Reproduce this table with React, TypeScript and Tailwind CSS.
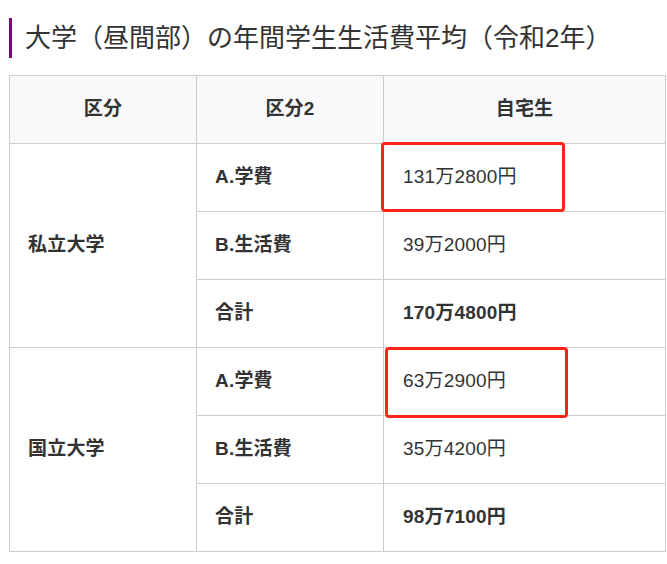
import React from "react";

const font = { fontFamily: '"Liberation Sans", "Noto Sans CJK JP", sans-serif' };

type Row = { a?: string; b: string; c: string; bold?: boolean; box?: "one" | "two" };

const rows: Row[] = [
  { a: "私立大学", b: "A.学費", c: "131万2800円", box: "one" },
  { b: "B.生活費", c: "39万2000円" },
  { b: "合計", c: "170万4800円", bold: true },
  { a: "国立大学", b: "A.学費", c: "63万2900円", box: "two" },
  { b: "B.生活費", c: "35万4200円" },
  { b: "合計", c: "98万7100円", bold: true },
];

export default function App() {
  return (
    <div className="w-[667px] h-[564px] bg-white text-[#333]" style={font}>
      <div className="pt-[18px] pl-[9px] flex">
        <div className="w-[3px] h-[40px] bg-[#800080]" />
        <div className="pl-[13px] h-[40px] flex items-center text-[26px] leading-none font-normal text-[#333]">
          大学（昼間部）の年間学生生活費平均（令和2年）
        </div>
      </div>
      <table className="mt-[17px] ml-[9px] border-collapse text-[19px] tracking-[0.01em] table-fixed w-[656px]">
        <colgroup>
          <col className="w-[187px]" />
          <col className="w-[187px]" />
          <col className="w-[282px]" />
        </colgroup>
        <thead>
          <tr className="h-[68px] bg-[#f9f9fb]">
            <th className="border border-[#cccccc] font-bold text-center">区分</th>
            <th className="border border-[#cccccc] font-bold text-center">区分2</th>
            <th className="border border-[#cccccc] font-bold text-center">自宅生</th>
          </tr>
        </thead>
        <tbody>
          {rows.map((r, i) => (
            <tr key={i} className="h-[68px]">
              {r.a && (
                <td rowSpan={3} className="border border-[#cccccc] pl-[18px] font-bold">
                  {r.a}
                </td>
              )}
              <td className="border border-[#cccccc] pl-[18px] font-bold">{r.b}</td>
              <td className={`border border-[#cccccc] pl-[19px] relative ${r.bold ? "font-bold" : "font-normal"}`}>
                {r.c}
                {r.box === "one" && (
                  <div className="absolute left-[-3px] top-[-2px] w-[184px] h-[70px] border-[3px] border-[#ff2318] rounded-[4px]" />
                )}
                {r.box === "two" && (
                  <div className="absolute left-[1px] top-[-1px] w-[183px] h-[71px] border-[3px] border-[#ff2318] rounded-[4px]" />
                )}
              </td>
            </tr>
          ))}
        </tbody>
      </table>
    </div>
  );
}
